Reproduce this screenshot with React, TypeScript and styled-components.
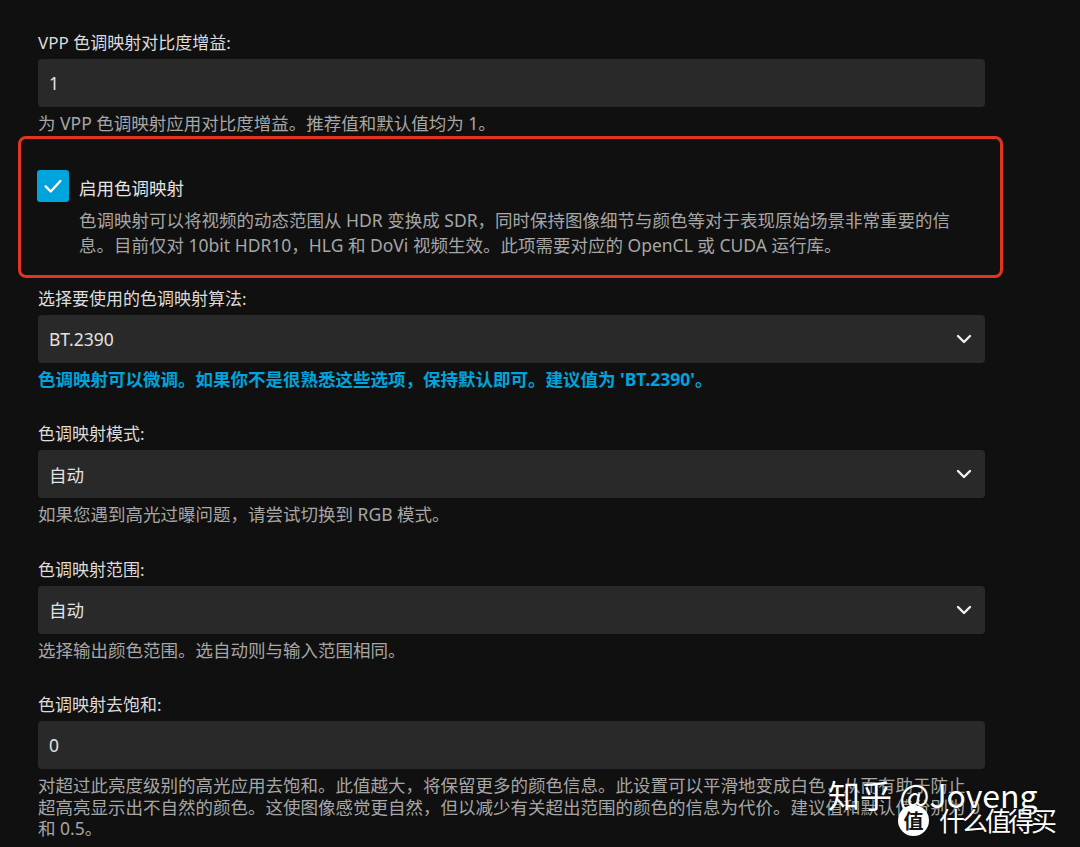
import React from "react";
import styled, { createGlobalStyle } from "styled-components";

const GlobalStyle = createGlobalStyle`
  html, body {
    margin: 0;
    padding: 0;
    background: #101010;
  }
  body {
    font-family: "Noto Sans", "Noto Sans CJK SC", sans-serif;
    -webkit-font-smoothing: antialiased;
  }
`;

const Screen = styled.div`
  position: relative;
  width: 1080px;
  height: 847px;
  overflow: hidden;
  background: #101010;
`;

const Form = styled.div`
  width: 947px;
  padding: 31px 0 0 38px;
`;

const Field = styled.div<{ $tight?: boolean }>`
  margin-bottom: ${(p) => (p.$tight ? "0" : "32px")};
`;

const Label = styled.div`
  font-size: 17px;
  line-height: 24px;
  margin-bottom: 4px;
  color: #dcdcdc;
`;

const InputBox = styled.div`
  position: relative;
  height: 48px;
  box-sizing: border-box;
  padding: 0 11px;
  display: flex;
  align-items: center;
  background: #292929;
  border-radius: 4px;
  font-size: 17.5px;
  color: #e2e2e2;
`;

const Chevron = styled.svg`
  position: absolute;
  right: 13px;
  top: 50%;
  margin-top: -5px;
`;

const Help = styled.div<{ $accent?: boolean }>`
  margin-top: 6px;
  max-width: 944px;
  font-size: 17.5px;
  line-height: 21.5px;
  color: ${(p) => (p.$accent ? "#00a4dc" : "#a6a6a6")};
  font-weight: ${(p) => (p.$accent ? 700 : 400)};
`;

const Highlight = styled.div`
  margin: 1px -18px 9px -20px;
  padding: 30px 15px 17px 16px;
  border: 3px solid #e23420;
  border-radius: 8px;
  display: flex;
  align-items: flex-start;
  gap: 10px;
`;

const CheckBox = styled.div`
  flex: none;
  width: 32px;
  height: 32px;
  margin-top: 1px;
  border-radius: 3px;
  background: #00a4dc;
  display: flex;
  align-items: center;
  justify-content: center;
`;

const CheckText = styled.div`
  padding-top: 6px;
`;

const CheckTitle = styled.div`
  font-size: 17.5px;
  line-height: 26px;
  color: #e4e4e4;
`;

const CheckDesc = styled.div`
  margin-top: 7px;
  max-width: 885px;
  font-size: 17.5px;
  line-height: 25px;
  color: #a6a6a6;
`;

const ZhihuMark = styled.div`
  position: absolute;
  left: 828px;
  top: 774px;
  font-family: "Noto Sans CJK SC", "Noto Sans", sans-serif;
  font-size: 32px;
  line-height: 40px;
  color: #ffffff;
  white-space: nowrap;
  text-shadow: 0 0 3px rgba(0, 0, 0, 0.5);
`;

const SmzdmMark = styled.div`
  position: absolute;
  left: 898px;
  top: 804px;
  display: flex;
  align-items: center;
  gap: 10px;
  color: #ffffff;
  font-family: "Noto Sans CJK SC", sans-serif;
  white-space: nowrap;
`;

const SmzdmBadge = styled.span`
  width: 31px;
  height: 31px;
  border-radius: 50%;
  background: #ffffff;
  color: #151515;
  font-size: 20px;
  font-weight: 700;
  line-height: 31px;
  text-align: center;
`;

const SmzdmText = styled.span`
  font-size: 26px;
  line-height: 32px;
  letter-spacing: -3px;
  text-shadow: 0 0 3px rgba(0, 0, 0, 0.5);
`;

function Select({ value }: { value: string }) {
  return (
    <InputBox>
      {value}
      <Chevron width="16" height="10" viewBox="0 0 16 10">
        <polyline
          points="2,2 8,8 14,2"
          fill="none"
          stroke="#f0f0f0"
          strokeWidth="2.4"
          strokeLinecap="round"
          strokeLinejoin="round"
        />
      </Chevron>
    </InputBox>
  );
}

export default function App() {
  return (
    <Screen>
      <GlobalStyle />
      <Form>
        <Field $tight>
          <Label>VPP 色调映射对比度增益:</Label>
          <InputBox>1</InputBox>
          <Help>为 VPP 色调映射应用对比度增益。推荐值和默认值均为 1。</Help>
        </Field>

        <Highlight>
          <CheckBox>
            <svg width="22" height="22" viewBox="0 0 24 24">
              <polyline
                points="4,12.5 9.5,18 20,6.5"
                fill="none"
                stroke="#ffffff"
                strokeWidth="2.6"
                strokeLinecap="round"
                strokeLinejoin="round"
              />
            </svg>
          </CheckBox>
          <CheckText>
            <CheckTitle>启用色调映射</CheckTitle>
            <CheckDesc>
              色调映射可以将视频的动态范围从 HDR 变换成 SDR，同时保持图像细节与颜色等对于表现原始场景非常重要的信息。目前仅对 10bit HDR10，HLG 和 DoVi 视频生效。此项需要对应的 OpenCL 或 CUDA 运行库。
            </CheckDesc>
          </CheckText>
        </Highlight>

        <Field>
          <Label>选择要使用的色调映射算法:</Label>
          <Select value="BT.2390" />
          <Help $accent>
            色调映射可以微调。如果你不是很熟悉这些选项，保持默认即可。建议值为 'BT.2390'。
          </Help>
        </Field>

        <Field>
          <Label>色调映射模式:</Label>
          <Select value="自动" />
          <Help>如果您遇到高光过曝问题，请尝试切换到 RGB 模式。</Help>
        </Field>

        <Field>
          <Label>色调映射范围:</Label>
          <Select value="自动" />
          <Help>选择输出颜色范围。选自动则与输入范围相同。</Help>
        </Field>

        <Field>
          <Label>色调映射去饱和:</Label>
          <InputBox>0</InputBox>
          <Help>
            对超过此亮度级别的高光应用去饱和。此值越大，将保留更多的颜色信息。此设置可以平滑地变成白色，从而有助于防止超高亮显示出不自然的颜色。这使图像感觉更自然，但以减少有关超出范围的颜色的信息为代价。建议值和默认值分别为 0 和 0.5。
          </Help>
        </Field>
      </Form>

      <ZhihuMark>知乎 @Joveng</ZhihuMark>
      <SmzdmMark>
        <SmzdmBadge>值</SmzdmBadge>
        <SmzdmText>什么值得买</SmzdmText>
      </SmzdmMark>
    </Screen>
  );
}
